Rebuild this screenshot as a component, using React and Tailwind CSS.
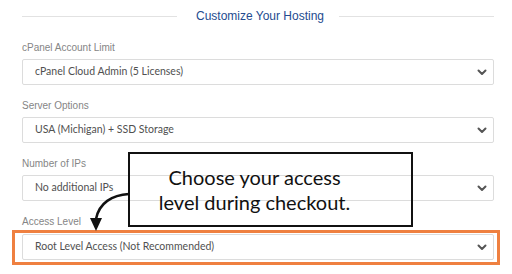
import React from 'react';

const fields = [
  { label: 'cPanel Account Limit', value: 'cPanel Cloud Admin (5 Licenses)' },
  { label: 'Server Options', value: 'USA (Michigan) + SSD Storage' },
  { label: 'Number of IPs', value: 'No additional IPs' },
];

const Chevron = () => (
  <svg width="10" height="7" viewBox="0 0 10 7" className="shrink-0">
    <path d="M1.5 1.5 L5 5 L8.5 1.5" fill="none" stroke="#555" strokeWidth="2" strokeLinecap="round" strokeLinejoin="round" />
  </svg>
);

const Select = ({ value }) => (
  <div className="h-[26px] flex items-center justify-between pl-[12px] pr-[6px] bg-white border border-[#dcdcdc] rounded-[2px]">
    <span className="text-[10.5px] text-[#505050] font-['Lato',sans-serif]">{value}</span>
    <Chevron />
  </div>
);

const Label = ({ children }) => (
  <div className="h-[14px] leading-[14px] text-[10px] text-[#858585] font-['Liberation_Sans',sans-serif]">{children}</div>
);

export default function App() {
  return (
    <div className="relative w-[512px] h-[274px] overflow-hidden bg-white pt-[8px] pl-[22px] pr-[18px]">
      {/* header */}
      <div className="h-[16px] flex items-center">
        <div className="flex-1 h-px bg-[#e2e2e2]" />
        <div className="pl-[19px] pr-[15px] text-[12px] text-[#244b8f] font-['Liberation_Sans',sans-serif]">Customize Your Hosting</div>
        <div className="flex-1 h-px bg-[#e2e2e2]" />
      </div>

      {fields.map((f, i) => (
        <div key={f.label} className={i === 0 ? 'mt-[17px]' : 'mt-[14px]'}>
          <Label>{f.label}</Label>
          <div className="mt-[4px]">
            <Select value={f.value} />
          </div>
        </div>
      ))}

      <div className="mt-[14px]">
        <Label>Access Level</Label>
        <div className="mt-[1px] -ml-[10px] -mr-[6px] border-[3px] border-[#ef8040] pl-[7px] pr-[3px] pt-[1px] pb-[2px]">
          <Select value="Root Level Access (Not Recommended)" />
        </div>
      </div>

      {/* callout */}
      <div className="absolute left-[128px] top-[152px] w-[285px] h-[75px] border-2 border-[#111] flex flex-col items-center justify-center pr-[32px] text-[20px] leading-[25px] font-normal text-[#111] font-['Lato',sans-serif]">
        <div>Choose your access</div>
        <div>level during checkout.</div>
      </div>

      <svg className="absolute left-0 top-0" width="512" height="274" viewBox="0 0 512 274" style={{ pointerEvents: 'none' }}>
        <path d="M129 194 C112 195 99 203 96 219" fill="none" stroke="#111" strokeWidth="2.5" />
        <polygon points="90,218 102,218 96,231" fill="#111" />
      </svg>
    </div>
  );
}
